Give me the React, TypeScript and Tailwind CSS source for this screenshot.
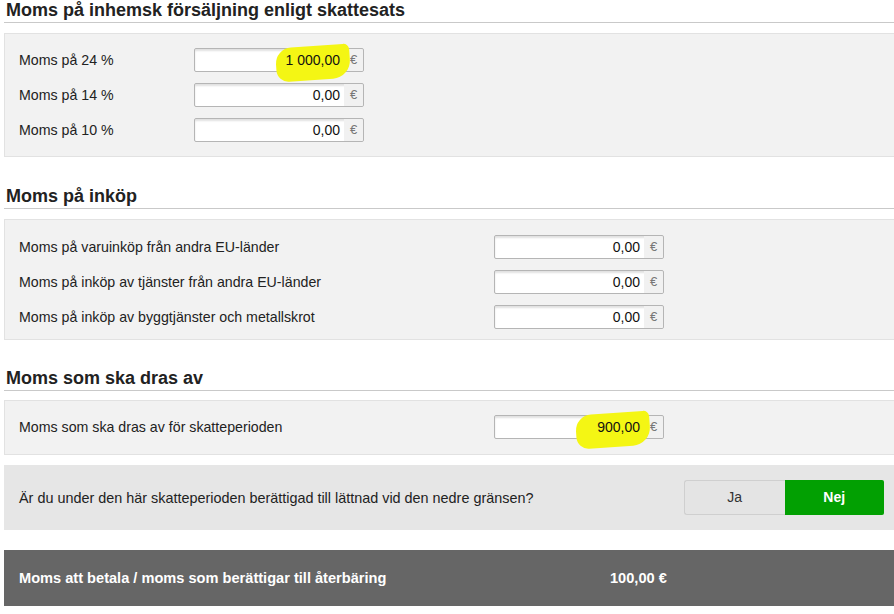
import React from 'react';

type Row = { label: string; value: string; marked?: boolean };

const domestic: Row[] = [
  { label: 'Moms på 24 %', value: '1 000,00', marked: true },
  { label: 'Moms på 14 %', value: '0,00' },
  { label: 'Moms på 10 %', value: '0,00' },
];

const purchases: Row[] = [
  { label: 'Moms på varuinköp från andra EU-länder', value: '0,00' },
  { label: 'Moms på inköp av tjänster från andra EU-länder', value: '0,00' },
  { label: 'Moms på inköp av byggtjänster och metallskrot', value: '0,00' },
];

function Heading({ children }: { children: React.ReactNode }) {
  return (
    <h2 className="ml-1 border-b border-[#c9c9c9] pb-[2px] pl-[2px] text-[18px] leading-[20px] font-bold text-[#222]">
      {children}
    </h2>
  );
}

function MoneyInput({ value, marked }: { value: string; marked?: boolean }) {
  return (
    <div className="relative flex h-[24px] w-[170px] rounded-[2px] border border-[#b5b5b5] bg-white shadow-[inset_0_2px_2px_rgba(0,0,0,0.12)]">
      <div className="relative flex flex-1 items-center justify-end pt-[1px] pr-[4px] text-[14px] text-[#111]">
        {marked && (
          <span className="absolute top-[-3px] right-[-6px] bottom-[-9px] w-[74px] rotate-[-4deg] rounded-[16px_6px_18px_12px] bg-[#f4f614]" />
        )}
        <span className="relative">{value}</span>
      </div>
      <div className="flex w-[19px] items-center justify-center rounded-r-[2px] bg-[#f1f1f1] text-[13px] text-[#777]">
        €
      </div>
    </div>
  );
}

function FieldRow({ row, labelWidth }: { row: Row; labelWidth: string }) {
  return (
    <div className="flex items-center">
      <div className={`${labelWidth} pt-[1px] text-[14.2px] text-[#222]`}>{row.label}</div>
      <MoneyInput value={row.value} marked={row.marked} />
    </div>
  );
}

export default function App() {
  return (
    <div
      className="h-[614px] w-[894px] overflow-hidden bg-white"
      style={{ fontFamily: '"Liberation Sans", Arial, sans-serif' }}
    >
      <div>
        <Heading>Moms på inhemsk försäljning enligt skattesats</Heading>
        <div className="mt-[10px] ml-1 flex flex-col gap-[11px] border border-r-0 border-[#e2e2e2] bg-[#f2f2f2] pt-[14px] pb-[14px] pl-[14px]">
          {domestic.map((r) => (
            <FieldRow key={r.label} row={r} labelWidth="w-[175px]" />
          ))}
        </div>
      </div>

      <div className="mt-[29px]">
        <Heading>Moms på inköp</Heading>
        <div className="mt-[10px] ml-1 flex flex-col gap-[11px] border border-r-0 border-[#e2e2e2] bg-[#f2f2f2] pt-[15px] pb-[10px] pl-[14px]">
          {purchases.map((r) => (
            <FieldRow key={r.label} row={r} labelWidth="w-[475px]" />
          ))}
        </div>
      </div>

      <div className="mt-[28px]">
        <Heading>Moms som ska dras av</Heading>
        <div className="mt-[9px] ml-1 border border-r-0 border-[#e2e2e2] bg-[#f2f2f2] pt-[14px] pb-[15px] pl-[14px]">
          <FieldRow
            row={{ label: 'Moms som ska dras av för skatteperioden', value: '900,00', marked: true }}
            labelWidth="w-[475px]"
          />
        </div>
      </div>

      <div className="mt-[10px] ml-1 flex h-[65px] items-center justify-between bg-[#e6e6e6] pr-[10px] pl-[15px]">
        <div className="pt-[2px] text-[14.4px] text-[#222]">
          Är du under den här skatteperioden berättigad till lättnad vid den nedre gränsen?
        </div>
        <div className="flex h-[35px] w-[200px]">
          <button className="flex-1 rounded-l-[3px] border border-r-0 border-[#cfcfcf] bg-[#e4e4e4] text-[14px] text-[#333]">
            Ja
          </button>
          <button className="flex-1 rounded-r-[2px] bg-[#02a002] text-[14px] font-bold text-white">
            Nej
          </button>
        </div>
      </div>

      <div className="mt-[20px] ml-1 flex h-[56px] items-center bg-[#666666] pt-[2px] pl-[15px] text-[14.6px] font-bold text-white">
        <div className="w-[591px]">Moms att betala / moms som berättigar till återbäring</div>
        <div>100,00 €</div>
      </div>
    </div>
  );
}
